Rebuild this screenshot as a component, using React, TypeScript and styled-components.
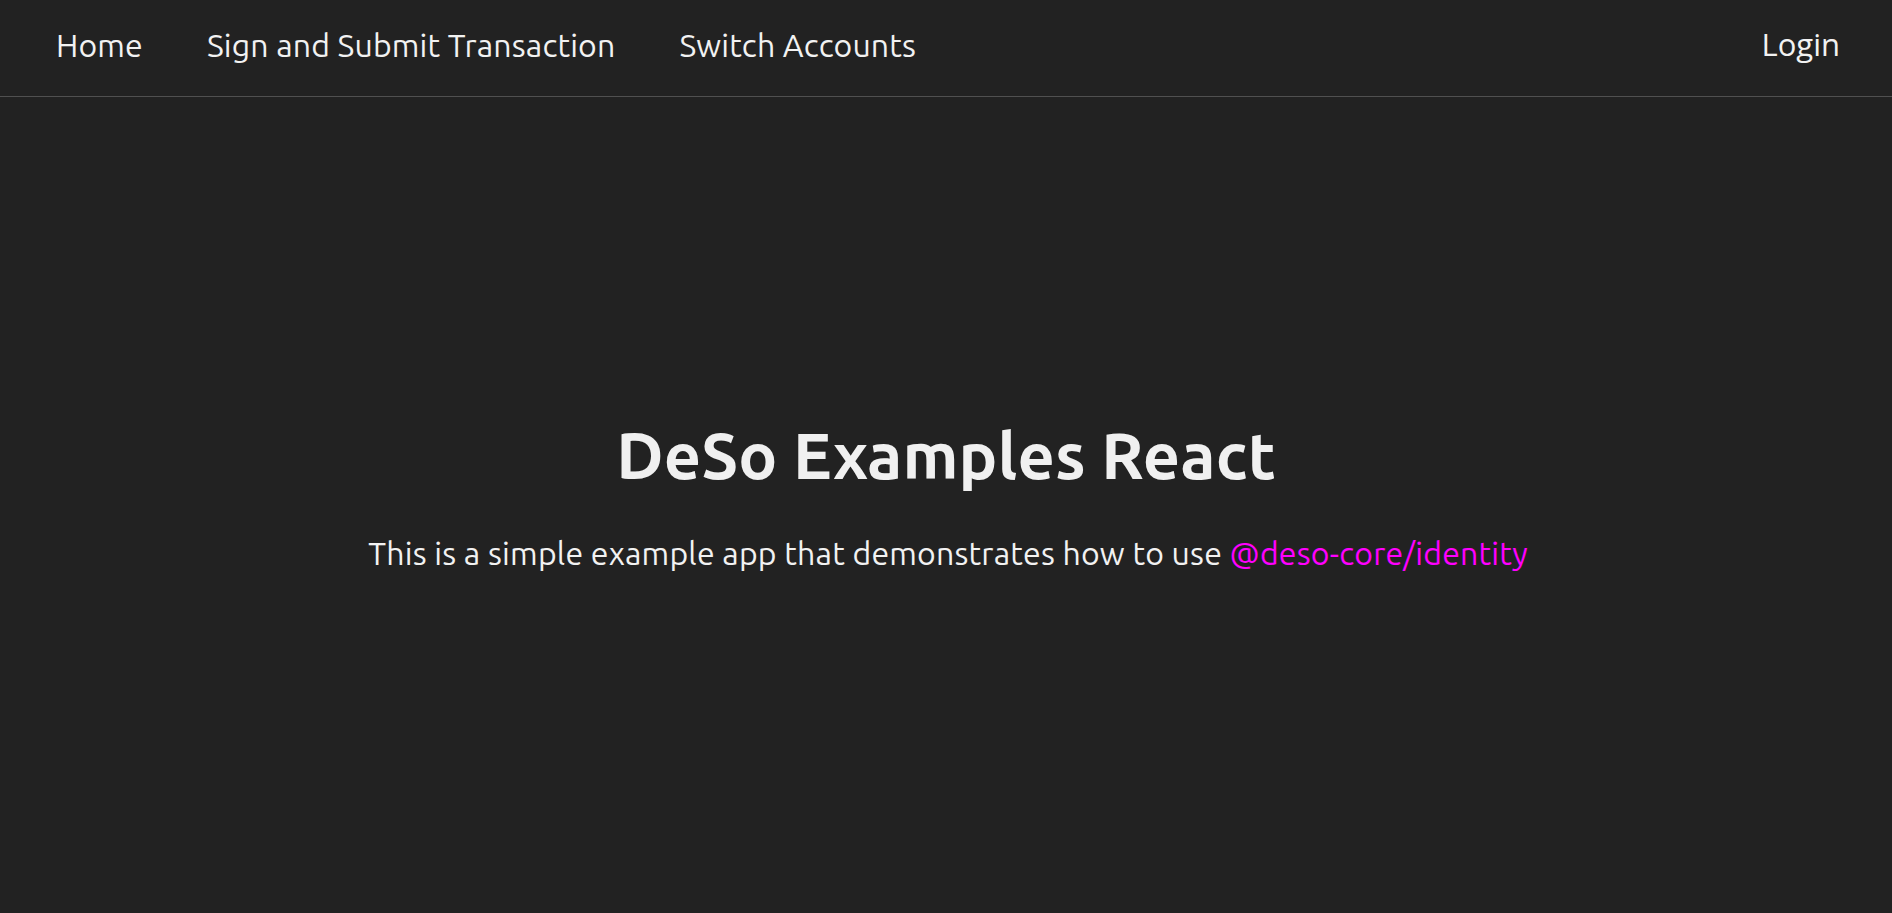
import React from "react";
import styled, { createGlobalStyle } from "styled-components";

const Global = createGlobalStyle`
  html, body { margin: 0; padding: 0; background: #222222; }
  body { font-family: Ubuntu, Lato, "Open Sans", sans-serif; color: #f0f0f0; }
  * { box-sizing: border-box; }
`;

const Page = styled.div`
  min-height: 100vh;
  display: flex;
  flex-direction: column;
  background: #222222;
`;

const NavBar = styled.nav`
  height: 97px;
  flex: 0 0 97px;
  display: flex;
  align-items: center;
  justify-content: space-between;
  padding: 0 52px 7px 56px;
  border-bottom: 1px solid #505050;
`;

const NavLinks = styled.div`
  display: flex;
  align-items: center;
  gap: 64px;
`;

const NavLink = styled.a`
  font-family: Ubuntu, Lato, sans-serif;
  font-size: 32px;
  line-height: 38px;
  letter-spacing: 0.15px;
  color: #f2f2f2;
  text-decoration: none;
  cursor: pointer;
`;

const LoginButton = styled.button`
  background: none;
  border: none;
  padding: 0 0 2px;
  font-family: "Open Sans", sans-serif;
  font-size: 31px;
  line-height: 38px;
  color: #f2f2f2;
  cursor: pointer;
`;

const Main = styled.main`
  flex: 1;
  display: flex;
  flex-direction: column;
  align-items: center;
  justify-content: center;
  text-align: center;
  padding-bottom: 23px;
`;

const Title = styled.h1`
  margin: 0;
  font-family: Ubuntu, Lato, sans-serif;
  font-size: 65px;
  font-weight: 700;
  line-height: 78px;
  letter-spacing: 0.1px;
  color: #f0f0f0;
`;

const Subtitle = styled.p`
  margin: 40px 0 0 4px;
  font-family: Ubuntu, Lato, sans-serif;
  font-size: 32px;
  line-height: 38px;
  letter-spacing: 0.2px;
  color: #f2f2f2;
`;

const PinkLink = styled.a`
  color: #ff00ff;
  text-decoration: none;
`;

export default function App() {
  return (
    <Page>
      <Global />
      <NavBar>
        <NavLinks>
          <NavLink>Home</NavLink>
          <NavLink>Sign and Submit Transaction</NavLink>
          <NavLink>Switch Accounts</NavLink>
        </NavLinks>
        <LoginButton>Login</LoginButton>
      </NavBar>
      <Main>
        <Title>DeSo Examples React</Title>
        <Subtitle>
          This is a simple example app that demonstrates how to use{" "}
          <PinkLink>@deso-core/identity</PinkLink>
        </Subtitle>
      </Main>
    </Page>
  );
}
